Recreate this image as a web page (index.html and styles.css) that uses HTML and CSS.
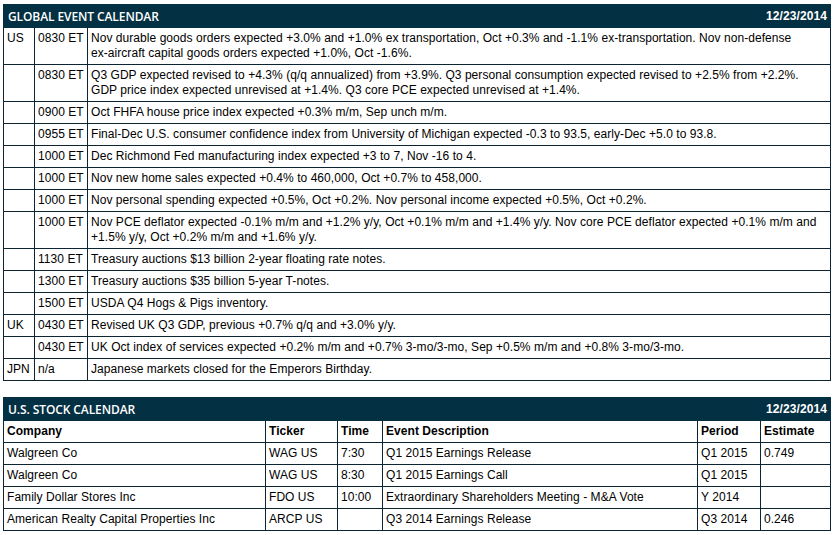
FILE: index.html
```html
<!DOCTYPE html>
<html>
<head>
<meta charset="utf-8">
<link rel="stylesheet" href="styles.css">
</head>
<body>
<div class="page">
  <section class="panel">
    <div class="bar"><span class="title">GLOBAL EVENT CALENDAR</span><span class="date">12/23/2014</span></div>
    <table class="grid events">
      <colgroup><col class="c-ctry"><col class="c-time"><col></colgroup>
      <tr><td>US</td><td>0830 ET</td><td>Nov durable goods orders expected +3.0% and +1.0% ex transportation, Oct +0.3% and -1.1% ex-transportation. Nov non-defense <span class="nw">ex-aircraft</span> capital goods orders expected +1.0%, Oct -1.6%.</td></tr>
      <tr><td></td><td>0830 ET</td><td>Q3 GDP expected revised to +4.3% (q/q annualized) from +3.9%. Q3 personal consumption expected revised to +2.5% from +2.2%. GDP price index expected unrevised at +1.4%. Q3 core PCE expected unrevised at +1.4%.</td></tr>
      <tr><td></td><td>0900 ET</td><td>Oct FHFA house price index expected +0.3% m/m, Sep unch m/m.</td></tr>
      <tr><td></td><td>0955 ET</td><td>Final-Dec U.S. consumer confidence index from University of Michigan expected -0.3 to 93.5, early-Dec +5.0 to 93.8.</td></tr>
      <tr><td></td><td>1000 ET</td><td>Dec Richmond Fed manufacturing index expected +3 to 7, Nov -16 to 4.</td></tr>
      <tr><td></td><td>1000 ET</td><td>Nov new home sales expected +0.4% to 460,000, Oct +0.7% to 458,000.</td></tr>
      <tr><td></td><td>1000 ET</td><td>Nov personal spending expected +0.5%, Oct +0.2%. Nov personal income expected +0.5%, Oct +0.2%.</td></tr>
      <tr><td></td><td>1000 ET</td><td>Nov PCE deflator expected -0.1% m/m and +1.2% y/y, Oct +0.1% m/m and +1.4% y/y. Nov core PCE deflator expected +0.1% m/m and +1.5% y/y, Oct +0.2% m/m and +1.6% y/y.</td></tr>
      <tr><td></td><td>1130 ET</td><td>Treasury auctions $13 billion 2-year floating rate notes.</td></tr>
      <tr><td></td><td>1300 ET</td><td>Treasury auctions $35 billion 5-year T-notes.</td></tr>
      <tr><td></td><td>1500 ET</td><td>USDA Q4 Hogs &amp; Pigs inventory.</td></tr>
      <tr><td>UK</td><td>0430 ET</td><td>Revised UK Q3 GDP, previous +0.7% q/q and +3.0% y/y.</td></tr>
      <tr><td></td><td>0430 ET</td><td>UK Oct index of services expected +0.2% m/m and +0.7% 3-mo/3-mo, Sep +0.5% m/m and +0.8% 3-mo/3-mo.</td></tr>
      <tr><td>JPN</td><td>n/a</td><td>Japanese markets closed for the Emperors Birthday.</td></tr>
    </table>
  </section>

  <section class="panel">
    <div class="bar"><span class="title">U.S. STOCK CALENDAR</span><span class="date">12/23/2014</span></div>
    <table class="grid stocks">
      <colgroup><col class="c-co"><col class="c-tk"><col class="c-tm"><col><col class="c-pd"><col class="c-est"></colgroup>
      <tr class="head"><th>Company</th><th>Ticker</th><th>Time</th><th>Event Description</th><th>Period</th><th>Estimate</th></tr>
      <tr><td>Walgreen Co</td><td>WAG US</td><td>7:30</td><td>Q1 2015 Earnings Release</td><td>Q1 2015</td><td>0.749</td></tr>
      <tr><td>Walgreen Co</td><td>WAG US</td><td>8:30</td><td>Q1 2015 Earnings Call</td><td>Q1 2015</td><td></td></tr>
      <tr><td>Family Dollar Stores Inc</td><td>FDO US</td><td>10:00</td><td>Extraordinary Shareholders Meeting - M&amp;A Vote</td><td>Y 2014</td><td></td></tr>
      <tr><td>American Realty Capital Properties Inc</td><td>ARCP US</td><td></td><td>Q3 2014 Earnings Release</td><td>Q3 2014</td><td>0.246</td></tr>
    </table>
  </section>
</div>
</body>
</html>
```

FILE: styles.css
```css
html, body {
  margin: 0;
  padding: 0;
  background: #ffffff;
}

.page {
  padding: 4px 4px 0 3px;
  display: flex;
  flex-direction: column;
  gap: 16px;
  font-family: "Liberation Sans", Arial, sans-serif;
  font-size: 12px;
  color: #000000;
}

.panel {
  display: flex;
  flex-direction: column;
}

.bar {
  height: 24px;
  background: #033042;
  color: #ffffff;
  display: flex;
  align-items: center;
  justify-content: space-between;
  padding: 0 4px 0 5px;
  box-sizing: border-box;
}

.title {
  font-family: "Open Sans", sans-serif;
  font-weight: 600;
  font-size: 12px;
  letter-spacing: -0.1px;
}

.date {
  font-family: "Liberation Sans", Arial, sans-serif;
  font-weight: bold;
  font-size: 12px;
  letter-spacing: 0.1px;
}

.grid {
  width: 100%;
  border-collapse: collapse;
  table-layout: fixed;
}

.grid td, .grid th {
  border: 1px solid #0d2432;
  padding: 3px 3px 3px 3px;
  line-height: 15px;
  vertical-align: top;
  text-align: left;
  letter-spacing: 0.05px;
}

.grid th {
  font-weight: bold;
}

.grid tr:first-child td, .grid tr:first-child th {
  border-top: none;
}

.nw {
  white-space: nowrap;
}

.c-ctry { width: 31px; }
.c-time { width: 53px; }

.c-co { width: 262px; }
.c-tk { width: 72px; }
.c-tm { width: 45px; }
.c-pd { width: 63px; }
.c-est { width: 70px; }
```
